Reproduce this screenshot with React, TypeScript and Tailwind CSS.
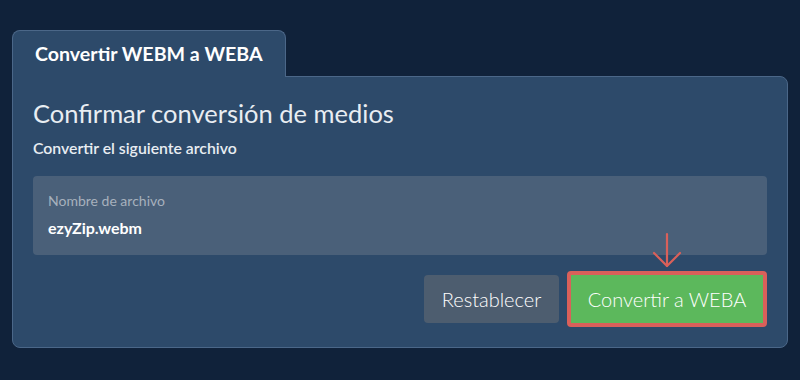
import React from 'react';

const App: React.FC = () => {
  return (
    <div
      className="w-[800px] h-[380px] bg-[#10223a] pt-[30px] px-[12px]"
      style={{ fontFamily: 'Lato, "Open Sans", sans-serif' }}
    >
      {/* Tab */}
      <div className="relative z-10 -mb-px inline-flex h-[47px] items-center rounded-t-[8px] border border-b-0 border-[#4b6788] bg-[#2d4a6a] px-[22px]">
        <span className="text-[19.6px] font-bold text-white">Convertir WEBM a WEBA</span>
      </div>

      {/* Panel */}
      <div className="rounded-b-[8px] rounded-tr-[8px] border border-[#4b6788] bg-[#2d4a6a] px-[20px] pt-[20px] pb-[20px]">
        <h2 className="text-[25.5px] leading-[32px] text-[#e8edf2]">Confirmar conversión de medios</h2>
        <p className="mt-[9px] text-[15.8px] leading-[20px] font-semibold text-[#e8edf2]">
          Convertir el siguiente archivo
        </p>

        {/* File name */}
        <div className="mt-[18px] flex h-[79px] flex-col rounded-[4px] bg-[#4a6079] px-[15px] pt-[16px]">
          <span className="text-[14px] leading-[18px] text-[#a7b1bd]">Nombre de archivo</span>
          <span className="mt-[6px] text-[16px] leading-[24px] font-bold text-white">ezyZip.webm</span>
        </div>

        {/* Actions */}
        <div className="mt-[16px] flex items-center justify-end gap-[8px]">
          <button className="h-[48px] w-[135px] rounded-[4px] bg-[#4d5d6f] text-[20px] font-light text-white">
            Restablecer
          </button>
          <div className="relative">
            <svg
              className="absolute left-1/2 top-[-39px] -translate-x-1/2"
              width="30"
              height="38"
              viewBox="0 0 30 38"
              fill="none"
              stroke="#d9605a"
              strokeWidth="2.2"
              strokeLinecap="round"
              strokeLinejoin="round"
            >
              <path d="M15 2 V34" />
              <path d="M2 21 L15 34 L28 21" />
            </svg>
            <button className="h-[56px] w-[200px] rounded-[4px] border-[4px] border-[#d9605a] bg-[#5cb85c] text-[20px] font-light text-white">
              Convertir a WEBA
            </button>
          </div>
        </div>
      </div>
    </div>
  );
};

export default App;
